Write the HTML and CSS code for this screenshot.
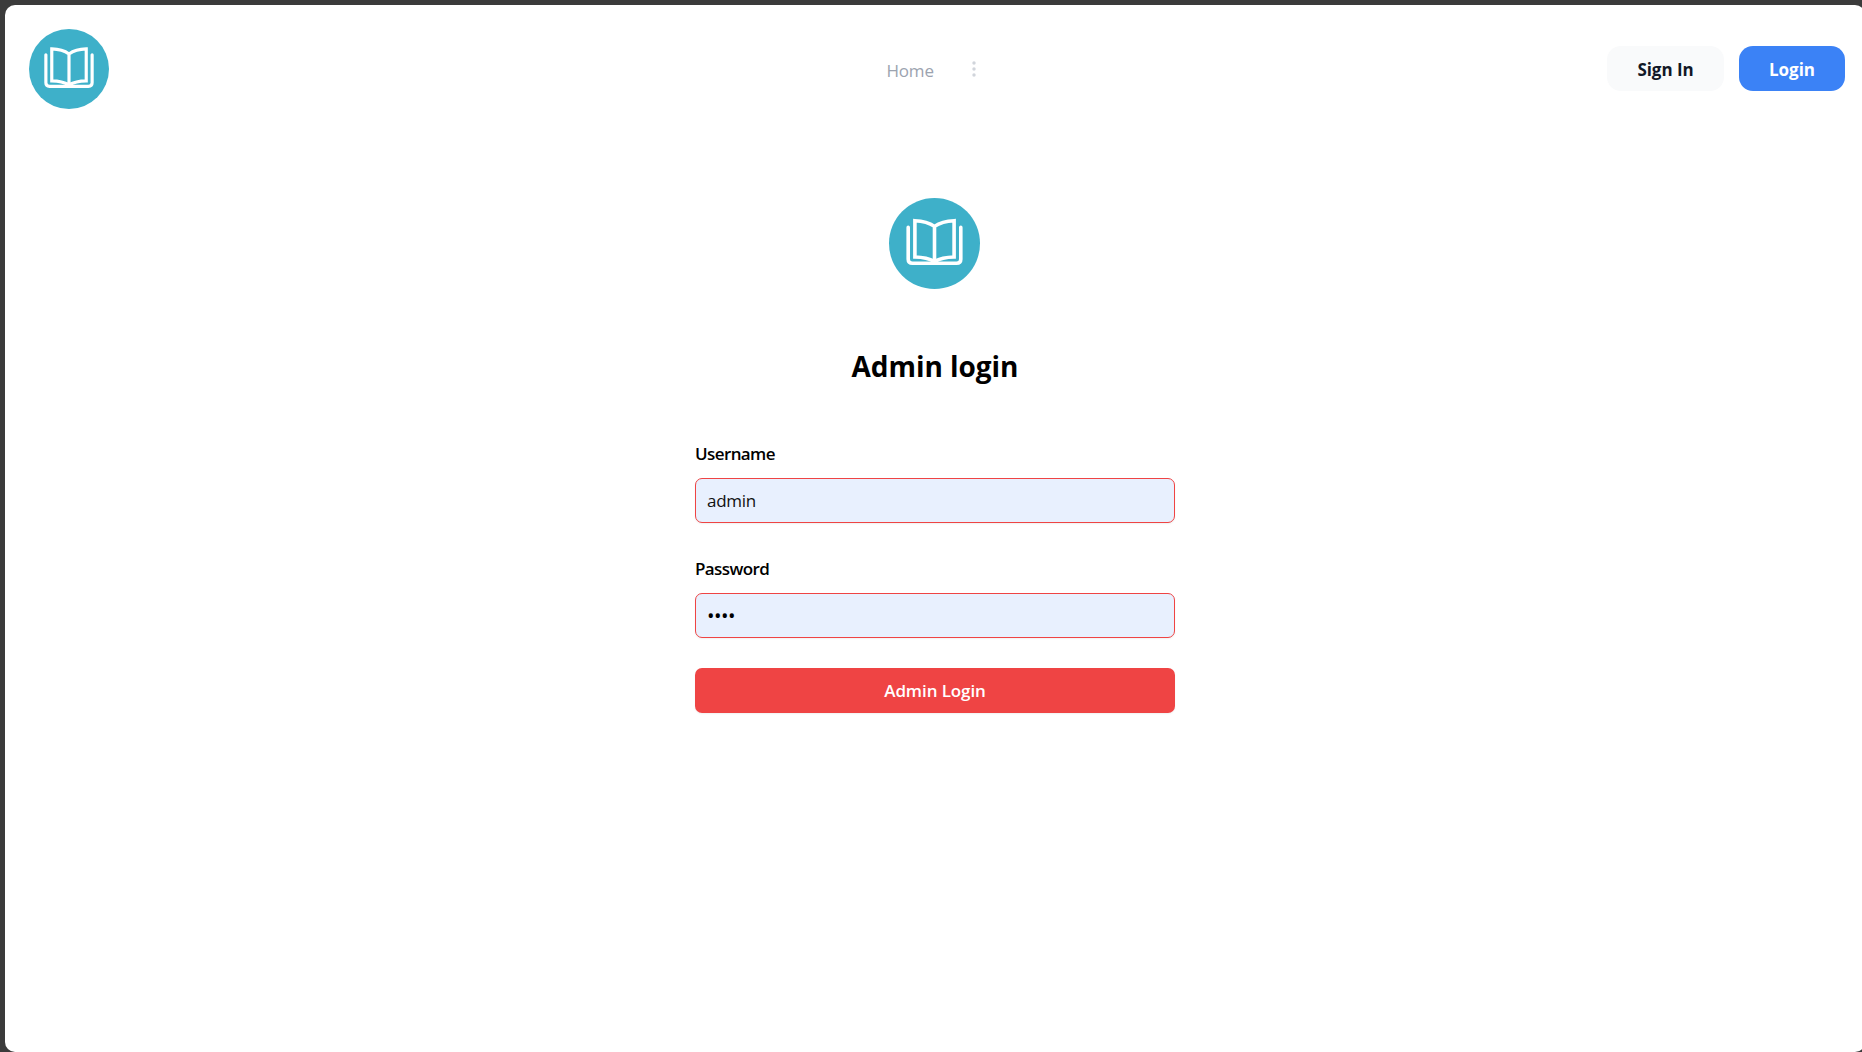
FILE: index.html
```html
<!DOCTYPE html>
<html lang="en">
<head>
<meta charset="utf-8">
<title>Admin login</title>
<link rel="stylesheet" href="styles.css">
</head>
<body>
<svg class="defs" aria-hidden="true">
  <symbol id="book" viewBox="0 0 91 91">
    <circle cx="45.5" cy="45.5" r="45.5" fill="#3eb0c9"/>
    <g fill="none" stroke="#fff" stroke-width="3.6">
      <path stroke-linecap="round" d="M19.2 29.4V61.2Q19.2 65.2 23.4 65.2H67.6Q71.8 65.2 71.8 61.2V29.4"/>
      <path d="M45.5 28.4Q38 23 25.9 22.7V59Q38 59.2 45.5 63.6Q53 59.2 65.1 59V22.7Q53 23 45.5 28.4V65"/>
    </g>
  </symbol>
</svg>
<div class="window">
  <header class="header">
    <a class="brand"><svg class="brand-logo"><use href="#book"/></svg></a>
    <nav class="nav">
      <a class="nav-link">Home</a>
      <svg class="nav-dots" viewBox="0 0 4 16"><circle cx="2" cy="2" r="1.7"/><circle cx="2" cy="8" r="1.7"/><circle cx="2" cy="14" r="1.7"/></svg>
    </nav>
    <div class="actions">
      <a class="btn btn-light">Sign In</a>
      <a class="btn btn-blue">Login</a>
    </div>
  </header>
  <main class="login">
    <svg class="login-logo"><use href="#book"/></svg>
    <h1 class="title">Admin login</h1>
    <form class="form">
      <label class="label label-user" for="user">Username</label>
      <input class="input" id="user" type="text" value="admin">
      <label class="label label-pass" for="pass">Password</label>
      <input class="input input-pass" id="pass" type="password" value="1234">
      <button class="submit" type="button">Admin Login</button>
    </form>
  </main>
</div>
</body>
</html>
```
FILE: styles.css
```css
* { box-sizing: border-box; }
body {
  margin: 0;
  height: 1052px;
  overflow: hidden;
  background: #3b3b3b;
  font-family: "Open Sans", "Noto Sans", sans-serif;
  font-size: 17px;
  line-height: 26px;
  color: #000;
}
.defs { position: absolute; width: 0; height: 0; }
.window {
  width: 1860px;
  height: 1047px;
  margin: 5px 0 0 5px;
  background: #fff;
  border-radius: 10px;
}
.header {
  display: grid;
  grid-template-columns: 1fr auto 1fr;
  align-items: center;
  height: 128px;
  padding: 0 20px 0 24px;
}
.brand, .brand-logo { display: block; width: 80px; height: 80px; }
.nav { display: flex; align-items: center; gap: 38px; width: 101px; }
.nav-link { width: 47px; color: #9ca3af; letter-spacing: -0.2px; padding-top: 3px; }
.nav-dots { width: 4px; height: 16px; fill: #d1d5db; flex: none; }
.actions { display: flex; justify-content: flex-end; gap: 15px; padding-bottom: 2px; }
.btn {
  display: flex;
  align-items: center;
  justify-content: center;
  height: 45px;
  padding-top: 3px;
  border-radius: 14px;
  font-weight: 700;
  letter-spacing: -0.05px;
}
.btn-light { width: 117px; background: #f9fafb; color: #111827; }
.btn-blue { width: 106px; background: #3b82f6; color: #fff; }
.login {
  display: flex;
  flex-direction: column;
  align-items: center;
  padding-top: 65px;
}
.login-logo { width: 91px; height: 91px; margin-right: 1px; }
.title { margin: 59px 0 0; font-size: 28px; line-height: 36px; font-weight: 700; letter-spacing: -0.05px; }
.form { display: flex; flex-direction: column; width: 480px; margin-top: 57px; }
.label { font-weight: 600; line-height: 26px; margin-bottom: 11px; letter-spacing: -0.6px; }
.label-pass { margin-top: 33px; }
.input {
  height: 45px;
  padding: 0 11px;
  border: 1px solid #ef4444;
  border-radius: 7px;
  background: #e8f0fe;
  box-shadow: 0 1px 2px rgba(0, 0, 0, .06);
  font: inherit;
  letter-spacing: -0.3px;
  color: #111;
  outline: 0;
}
.input-pass { font-size: 20px; letter-spacing: -0.5px; color: #000; }
.submit {
  height: 45px;
  margin-top: 30px;
  border: 0;
  border-radius: 7px;
  background: #ef4444;
  box-shadow: 0 1px 2px rgba(0, 0, 0, .06);
  color: #fff;
  font: inherit;
  font-weight: 600;
  letter-spacing: -0.1px;
}
```
